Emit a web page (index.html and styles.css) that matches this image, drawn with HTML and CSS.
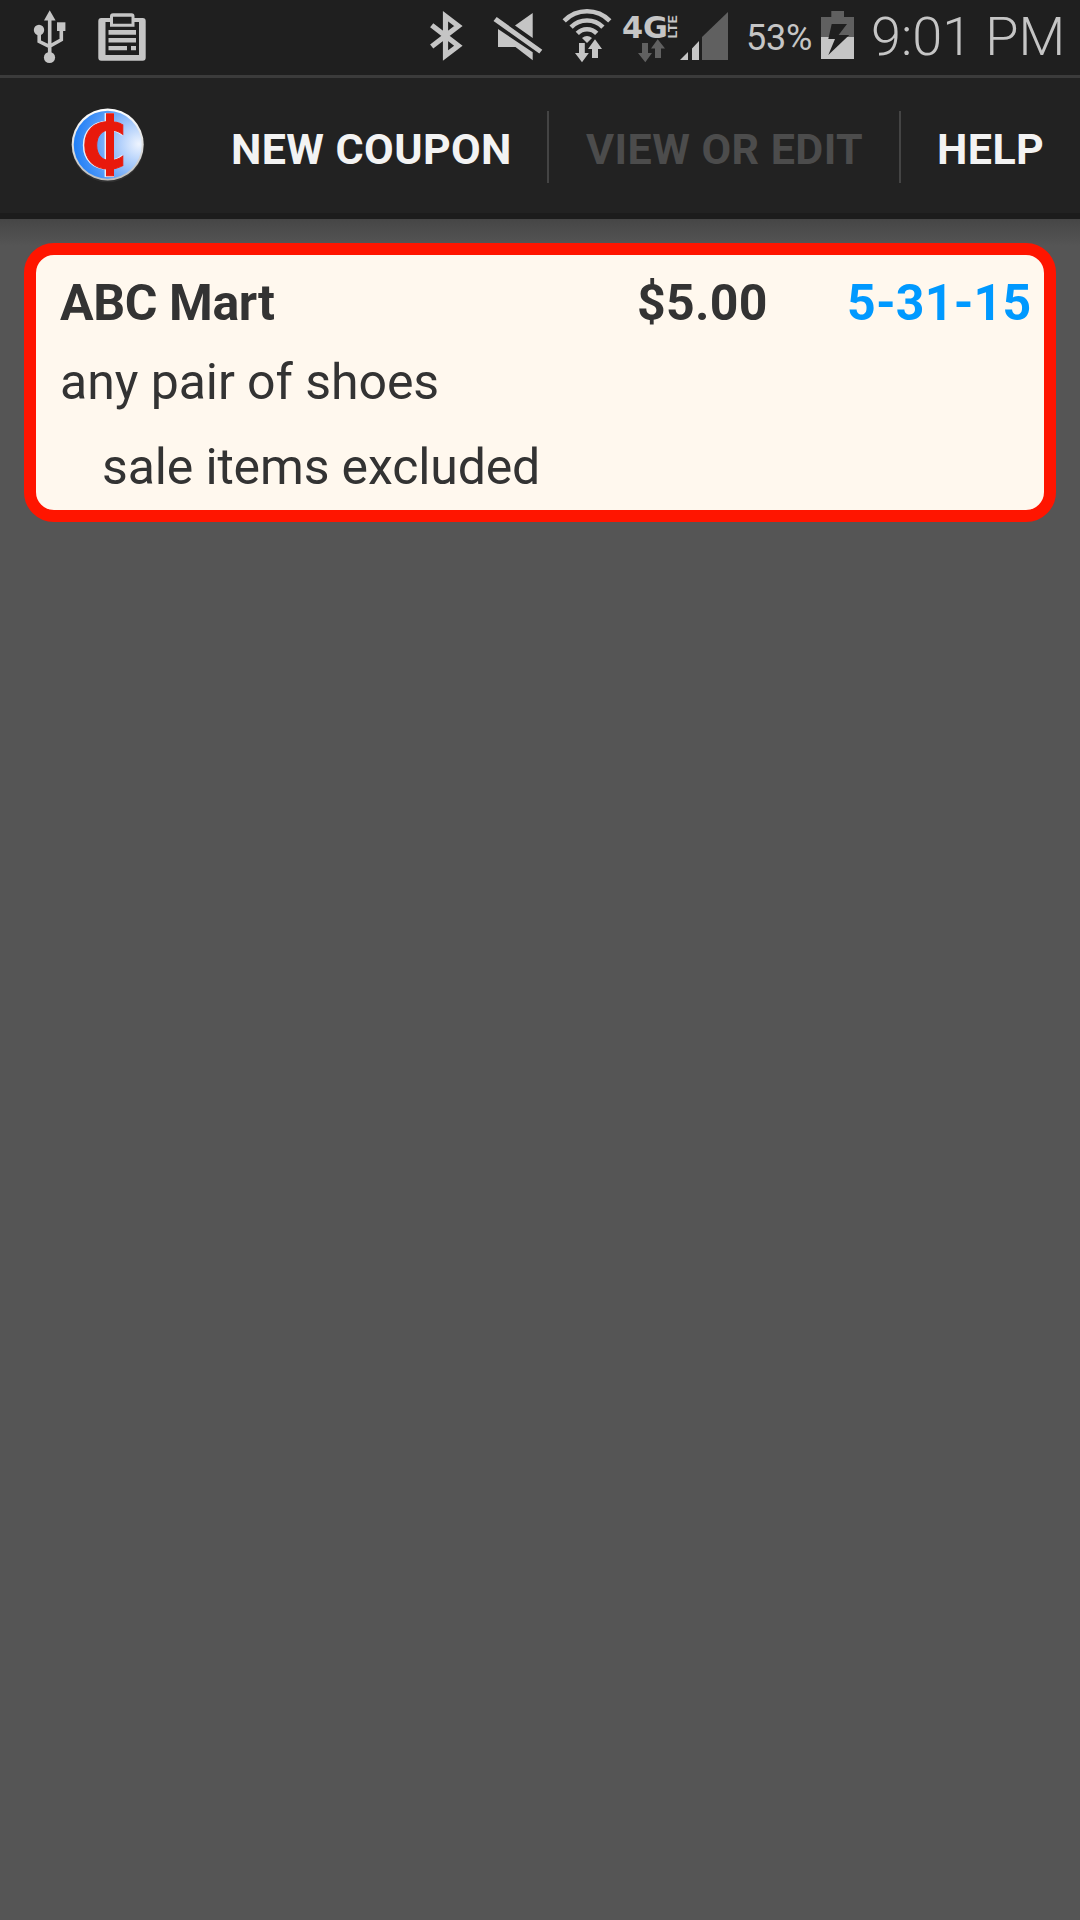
FILE: index.html
```html
<!DOCTYPE html>
<html lang="en">
<head>
<meta charset="utf-8">
<title>Coupons</title>
<link rel="stylesheet" href="styles.css">
</head>
<body>
<div class="status">
  <svg class="ic usb" width="33" height="75" viewBox="33 0 33 75">
    <path d="M49.7 10.3 55.6 20.6H44Z"/><circle cx="49.5" cy="57.5" r="5.6"/><circle cx="39" cy="30" r="5.2"/><rect x="57" y="22.3" width="8.4" height="8.7"/>
    <path class="ln" d="M49.7 18V54M39.2 33V41.5L49.7 46.7M61.3 30V39.7L49.7 46.2"/>
  </svg>
  <svg class="ic clip" width="48" height="75" viewBox="98 0 48 75">
    <path fill-rule="evenodd" d="M101.3 18H110V16.3Q110 13.3 113 13.3H131.5Q134.5 13.3 134.5 16.3V18H142.7Q145.7 18 145.7 21V57.7Q145.7 60.7 142.7 60.7H101.3Q98.3 60.7 98.3 57.7V21Q98.3 18 101.3 18ZM105.5 22V55H139V22H134.5V26.7H110V22ZM113 16.7V23.7H131.5V16.7Z"/>
    <path d="M108.5 30H136V34.7H108.5ZM108.5 38H136V42.5H108.5ZM108.5 46H127V50.3H108.5ZM131 46H136V50.3H131Z"/>
  </svg>
  <svg class="ic bt" width="34" height="75" viewBox="430 0 34 75">
    <path class="bts" d="M431.7 25.3 458.3 45.8 445.5 55.5V16.3L458.3 26 431.7 46.5"/>
  </svg>
  <svg class="ic mute" width="50" height="75" viewBox="493 0 50 75">
    <path d="M496.7 17 542.3 49.8 539.3 53.6 493.5 21ZM532.7 13V38L515 25.5ZM498 29 532.7 52.3V60.2L515.5 47H498Z"/>
  </svg>
  <svg class="ic wifi" width="50" height="75" viewBox="562 0 50 75">
    <path class="arc" d="M564.2 20.8A32 32 0 0 1 609.8 20.8M571.1 27.1A22.5 22.5 0 0 1 602.9 27.1M577.3 33.3A13.7 13.7 0 0 1 596.7 33.3"/>
    <path d="M582 38Q587 34 592 38L587 43Z"/>
    <path d="M579 43H584.8V53H588.8L582 62.3 575 53H579ZM592 58V49H588L595 39.3 602 49H598V58Z"/>
  </svg>
  <svg class="ic lte" width="58" height="75" viewBox="622 0 58 75">
    <text class="g4" x="622" y="38" textLength="46" lengthAdjust="spacingAndGlyphs">4G</text>
    <text class="ltet" transform="translate(677 38.5) rotate(-90)" textLength="23" lengthAdjust="spacingAndGlyphs">LTE</text>
    <path class="dim" d="M642 43H648V53H652L645.3 62.3 638 53H642ZM655 58V48.5H651L657.7 39.3 665 48.5H661V58Z"/>
  </svg>
  <svg class="ic sig" width="48" height="75" viewBox="680 0 48 75">
    <path d="M680 60 688 52V60ZM692 48.5 699 41V60H692Z"/><path class="dim" d="M702 37 728 12V60H702Z"/>
  </svg>
  <span class="pct">53%</span>
  <svg class="ic bat" width="33" height="75" viewBox="821 0 33 75">
    <path class="dim" d="M831.3 11H844V17H854V37H821V17H831.3Z"/><path d="M821 37H854V59H821Z"/>
    <path class="bolt" d="M831.7 24H847L838.6 35H849.3L828.3 55 835 39H828.3Z"/>
  </svg>
  <span class="time">9:01 PM</span>
</div>
<div class="bar">
  <svg class="logo" width="76" height="76" viewBox="70 107 76 76">
    <defs>
      <linearGradient id="rim" x1="0" y1="0" x2="0" y2="1"><stop offset="0" stop-color="#fff"/><stop offset="1" stop-color="#bdbdbd"/></linearGradient>
      <radialGradient id="face" gradientUnits="userSpaceOnUse" cx="139" cy="144" r="64"><stop offset="0" stop-color="#eef4fe"/><stop offset=".4" stop-color="#9cc3fa"/><stop offset=".75" stop-color="#4d97f8"/><stop offset="1" stop-color="#2380f6"/></radialGradient>
    </defs>
    <circle cx="107.7" cy="146" r="36.2" fill="#303030"/>
    <circle cx="107.7" cy="144.5" r="36" fill="url(#rim)"/>
    <circle cx="107.7" cy="144.7" r="34" fill="url(#face)"/>
    <g class="cent halo"><text x="80.6" y="167.8" textLength="45" lengthAdjust="spacingAndGlyphs">C</text><rect x="105.3" y="113.8" width="8" height="62.6"/></g>
    <g class="cent"><text x="81.8" y="167.6" textLength="45" lengthAdjust="spacingAndGlyphs">C</text><rect x="106.5" y="113.8" width="7" height="62"/></g>
  </svg>
  <nav class="menu"><a class="item">NEW COUPON</a><a class="item off">VIEW OR EDIT</a><a class="item">HELP</a></nav>
</div>
<main>
  <article class="card">
    <div class="row"><b class="store">ABC Mart</b><b class="amount">$5.00</b><b class="date">5-31-15</b></div>
    <p class="what">any pair of shoes</p>
    <p class="note">sale items excluded</p>
  </article>
</main>
</body>
</html>
```
FILE: styles.css
```css
*{box-sizing:border-box}
body{margin:0;height:1920px;background:#555;font-family:Roboto,sans-serif;overflow:hidden}
.status{height:78px;background:#1f1f1f;border-bottom:3px solid #3b3b3b;display:flex;color:#c5c5c5}
.ic{fill:#c5c5c5;flex:none}
.ic .ln{fill:none;stroke:#c5c5c5;stroke-width:3.6}
.ic .bts{fill:none;stroke:#c5c5c5;stroke-width:5.2;stroke-miterlimit:10}
.ic .arc{fill:none;stroke:#c5c5c5;stroke-width:4.6}
.ic .dim{fill:#606060}
.ic .bolt{fill:#1f1f1f}
.g4{font:bold 30px "DejaVu Sans",sans-serif}
.ltet{font:bold 12.5px Roboto,sans-serif}
.usb{margin-left:33px}
.clip{margin-left:32px}
.bt{margin-left:284px}
.mute{margin-left:29px}
.wifi{margin-left:19px}
.lte{margin-left:10px}
.pct{width:93px;padding-left:18px;font-size:36px;line-height:76px;letter-spacing:-.2px}
.time{margin-left:17px;font-size:54px;font-weight:300;line-height:73px;white-space:nowrap}
.bar{height:141px;background:#222;border-bottom:6px solid #1c1c1c;display:flex;padding-left:70px}
.logo{margin-top:29px;flex:none}
.cent{fill:#e8190c;stroke:#e8190c;stroke-width:1px}
.cent text{font:bold 62px "DejaVu Sans",sans-serif}
.halo{fill:#e6effc;stroke:#e6effc;stroke-width:1.4px}
.menu{display:flex;margin:33px 0 0 49px;height:72px}
.item{width:352px;padding:0 36px;font-size:43px;font-weight:700;line-height:76px;letter-spacing:.42px;color:#f3f3f3;white-space:nowrap}
.item + .item{border-left:2px solid #444}
.item.off{color:#4c4c4c;letter-spacing:.45px;padding-left:37px}
.item:last-child{width:auto;padding-right:0}
main{padding:24px;background:linear-gradient(#464646,#555 27px)}
.card{height:279px;border:12px solid #ff1500;border-radius:30px;background:#fff8ee;color:#333;padding:18px 0 0 24px;font-size:50px}
.row{display:flex;height:60px;line-height:60px}
.store{width:577px;letter-spacing:-.4px}
.amount{width:210px;letter-spacing:.28px}
.date{color:#09f;letter-spacing:.22px}
.card p{margin:0;font-size:50px;line-height:60px;letter-spacing:-.06px;white-space:nowrap}
.card .what{margin-top:19px}
.card .note{margin:25px 0 0 42px;letter-spacing:-.14px}
```
